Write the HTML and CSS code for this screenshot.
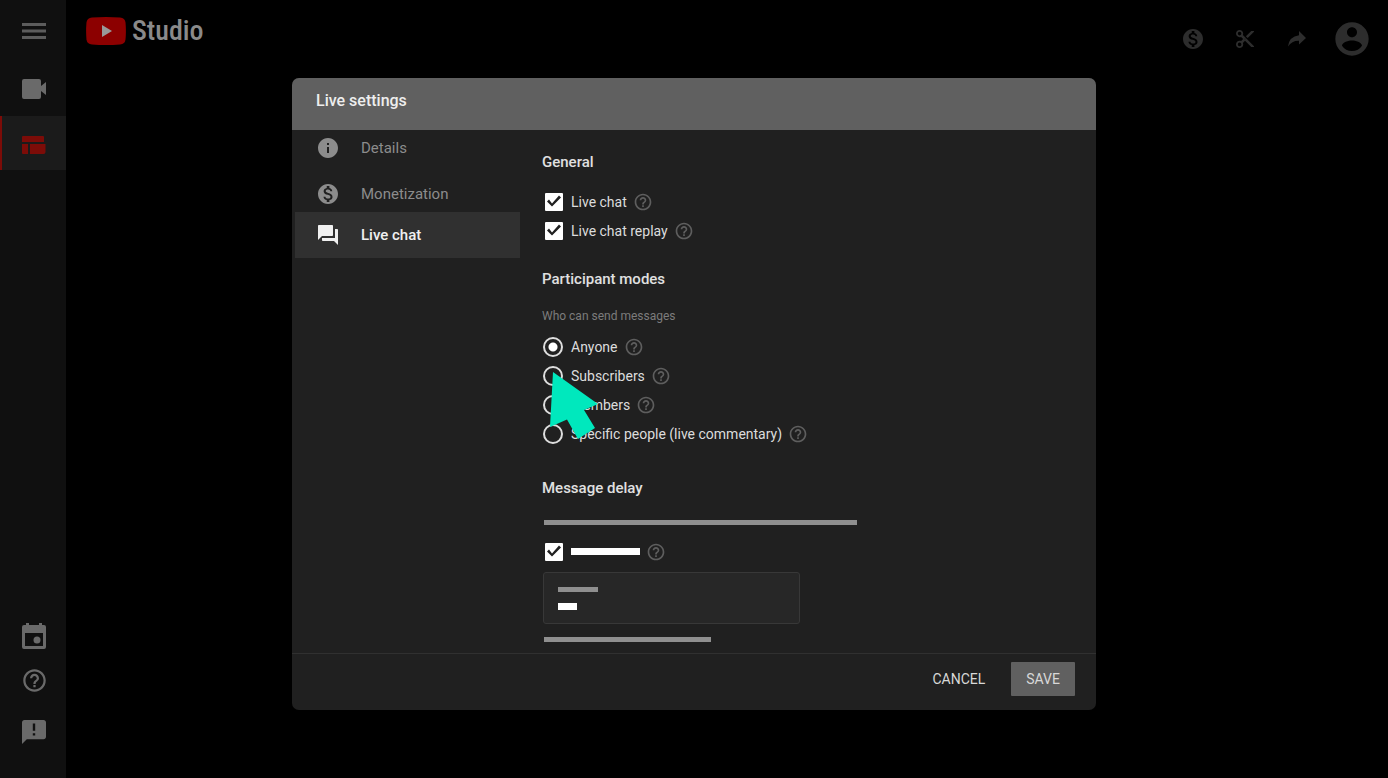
FILE: index.html
```html
<!DOCTYPE html>
<html lang="en">
<head>
<meta charset="utf-8">
<meta name="viewport" content="width=device-width, initial-scale=1">
<title>Studio - Live settings</title>
<link rel="stylesheet" href="styles.css">
</head>
<body>
<svg class="defs" aria-hidden="true">
  <symbol id="help" viewBox="0 0 24 24"><path d="M11 18h2v-2h-2v2zm1-16C6.480 2 2 6.480 2 12s4.480 10 10 10 10-4.480 10-10S17.520 2 12 2zm0 18c-4.410 0-8-3.590-8-8s3.590-8 8-8 8 3.590 8 8-3.590 8-8 8zm0-14c-2.210 0-4 1.790-4 4h2c0-1.100.9-2 2-2s2 .9 2 2c0 2-3 1.750-3 5h2c0-2.250 3-2.500 3-5 0-2.210-1.790-4-4-4z"/></symbol>
  <symbol id="dollar" viewBox="0 0 24 24"><path d="M12 2C6.480 2 2 6.480 2 12s4.480 10 10 10 10-4.480 10-10S17.520 2 12 2zm1.410 16.090V20h-2.670v-1.930c-1.710-.36-3.160-1.460-3.270-3.400h1.960c.1 1.050.82 1.870 2.650 1.870 1.960 0 2.400-.98 2.400-1.590 0-.83-.44-1.610-2.670-2.140-2.480-.6-4.180-1.620-4.180-3.670 0-1.720 1.390-2.840 3.110-3.210V4h2.670v1.950c1.860.45 2.790 1.860 2.850 3.390H14.300c-.05-1.110-.64-1.870-2.220-1.870-1.500 0-2.400.68-2.400 1.640 0 .84.65 1.390 2.670 1.910s4.180 1.390 4.180 3.910c-.01 1.830-1.380 2.830-3.120 3.160z"/></symbol>
</svg>

<div class="app">
  <nav class="sidebar" aria-label="Studio">
    <button class="side-button side-menu" aria-label="Menu"><svg width="24" height="18" viewBox="0 0 24 18"><path d="M0 1h24v3H0zm0 6.500h24v3H0zM0 14h24v3H0z"/></svg></button>
    <button class="side-button" aria-label="Stream"><svg width="24" height="20" viewBox="0 0 24 20"><path d="M2 0h15q2 0 2 2v5l5-4v13l-5-4v6q0 2-2 2H2q-2 0-2-2V2q0-2 2-2z"/></svg></button>
    <button class="side-button side-active" aria-label="Dashboard"><svg width="24" height="18" viewBox="0 0 24 18"><path d="M0 1q0-1 1-1h20q1 0 1 1v5H0zM0 8h6v10H1q-1 0-1-1zM8 8h15.500v8q0 2-2 2H8z"/></svg></button>
    <div class="side-bottom">
      <button class="side-button" aria-label="Schedule"><svg width="24" height="26" viewBox="0 0 24 26"><path fill-rule="evenodd" d="M4 0h3v2h10V0h3v2h2q2 0 2 2v20q0 2-2 2H2q-2 0-2-2V4q0-2 2-2h2zM3 10v13h18V10z"/><circle cx="15" cy="17" r="3.500"/></svg></button>
      <button class="side-button" aria-label="Help"><svg width="27" height="27"><use href="#help"/></svg></button>
      <button class="side-button side-feedback" aria-label="Send feedback"><svg width="24" height="24" viewBox="2 2 20 20"><path d="M20 2H4c-1.100 0-2 .9-2 2v18l4-4h14c1.100 0 2-.9 2-2V4c0-1.100-.9-2-2-2zm-7 13h-2v-2h2zm0-4h-2V5h2z"/></svg></button>
    </div>
  </nav>
  <header class="topbar">
    <a class="logo" href="#"><svg width="40" height="28" viewBox="0 0 40 28"><path class="logo-box" d="M6 .6Q20-.6 34 .6q5 .5 5.500 5 .8 8.400 0 16.800-.5 4.500-5.500 5-14 1.200-28 0-5-.5-5.500-5-.8-8.400 0-16.800Q1 1.100 6 .6z"/><path class="logo-play" d="M16 8l10 6-10 6z"/></svg><span>Studio</span></a>
    <div class="tools">
      <button class="tool" aria-label="Monetize"><svg width="24" height="24"><use href="#dollar"/></svg></button>
      <button class="tool" aria-label="Create clip"><svg width="18" height="18" viewBox="2 2 20 20"><path d="M9.640 7.640c.23-.5.36-1.050.36-1.640 0-2.210-1.790-4-4-4S2 3.790 2 6s1.790 4 4 4c.59 0 1.140-.13 1.640-.36L10 12l-2.360 2.360C7.140 14.130 6.590 14 6 14c-2.210 0-4 1.790-4 4s1.790 4 4 4 4-1.790 4-4c0-.59-.13-1.140-.36-1.640L12 14l7 7h3v-1L9.640 7.640zM6 8a2 2 0 1 1 0-4 2 2 0 0 1 0 4zm0 12a2 2 0 1 1 0-4 2 2 0 0 1 0 4zm6-7.500a.5.5 0 1 1 0-1 .5.5 0 0 1 0 1zM19 3l-6 6 2 2 7-7V3z"/></svg></button>
      <button class="tool" aria-label="Share"><svg width="18" height="16" viewBox="0 0 18 16"><path d="M11 0l7 7-7 6.500V9.800Q4 9.500 0 15.500 1 5.500 11 4.200z"/></svg></button>
      <button class="tool account" aria-label="Account"><svg width="40" height="40" viewBox="0 0 24 24"><path d="M12 2C6.480 2 2 6.480 2 12s4.480 10 10 10 10-4.480 10-10S17.520 2 12 2zm0 3c1.660 0 3 1.340 3 3s-1.340 3-3 3-3-1.340-3-3 1.340-3 3-3zm0 14.200c-2.500 0-4.710-1.280-6-3.220.03-1.990 4-3.080 6-3.080 1.990 0 5.970 1.090 6 3.080-1.290 1.940-3.500 3.220-6 3.220z"/></svg></button>
    </div>
  </header>
</div>

<div class="overlay">
  <section class="dialog" role="dialog" aria-labelledby="dialog-title">
    <h1 class="dialog-title" id="dialog-title">Live settings</h1>
    <div class="dialog-body">
      <nav class="tabs" aria-label="Settings">
        <a class="tab" href="#"><svg width="24" height="24" viewBox="0 0 24 24"><path d="M12 2C6.480 2 2 6.480 2 12s4.480 10 10 10 10-4.480 10-10S17.520 2 12 2zm1 15h-2v-6h2v6zm0-8h-2V7h2v2z"/></svg>Details</a>
        <a class="tab" href="#"><svg width="24" height="24"><use href="#dollar"/></svg>Monetization</a>
        <a class="tab tab-active" href="#" aria-current="page"><svg width="24" height="24" viewBox="0 0 24 24"><path d="M21 6h-2v9H6v2c0 .55.45 1 1 1h11l4 4V7c0-.55-.45-1-1-1zm-4 6V3c0-.55-.45-1-1-1H3c-.55 0-1 .45-1 1v14l4-4h10c.55 0 1-.45 1-1z"/></svg>Live chat</a>
      </nav>
      <form class="content" id="settings">
        <h2>General</h2>
        <div class="options">
          <div class="option"><input class="check" type="checkbox" id="chat" checked><label for="chat">Live chat</label><svg class="help"><use href="#help"/></svg></div>
          <div class="option"><input class="check" type="checkbox" id="replay" checked><label for="replay">Live chat replay</label><svg class="help"><use href="#help"/></svg></div>
        </div>
        <h2 class="modes">Participant modes</h2>
        <p class="hint">Who can send messages</p>
        <div class="options modes-list">
          <div class="option"><input class="radio" type="radio" name="who" id="anyone" checked><label for="anyone">Anyone</label><svg class="help"><use href="#help"/></svg></div>
          <div class="option"><input class="radio" type="radio" name="who" id="subs"><label for="subs">Subscribers</label><svg class="help"><use href="#help"/></svg>
            <svg class="cursor" viewBox="0 0 48 68" aria-hidden="true"><path d="M3 0l45 32-14 6 11 18-17 11-11-19.500L0 55z"/></svg></div>
          <div class="option"><input class="radio" type="radio" name="who" id="members"><label for="members">Members</label><svg class="help"><use href="#help"/></svg></div>
          <div class="option"><input class="radio" type="radio" name="who" id="specific"><label for="specific">Specific people (live commentary)</label><svg class="help"><use href="#help"/></svg></div>
        </div>
        <h2 class="delay">Message delay</h2>
        <div class="bar bar-long"></div>
        <div class="option delay-option"><input class="check" type="checkbox" id="delay" aria-label="Delay messages" checked><label class="bar bar-label" for="delay"></label><svg class="help"><use href="#help"/></svg></div>
        <button class="field" type="button" aria-label="Delay length"><span class="bar bar-name"></span><span class="bar bar-value"></span></button>
        <div class="bar bar-medium"></div>
      </form>
    </div>
    <footer class="actions">
      <button class="action" type="button">CANCEL</button>
      <button class="action save" type="submit" form="settings">SAVE</button>
    </footer>
  </section>
</div>
</body>
</html>
```

FILE: styles.css
```css
* { box-sizing: border-box; }

body {
  margin: 0;
  background: #000;
  color: #dcdcdc;
  font-family: Roboto, "Liberation Sans", sans-serif;
  font-size: 14px;
  line-height: 20px;
}

svg { display: block; flex: none; fill: currentColor; }
button { padding: 0; border: 0; background: none; color: inherit; font: inherit; }
a { color: inherit; text-decoration: none; }
h1, h2, p { margin: 0; }
.defs { position: absolute; width: 0; height: 0; }

.app { display: flex; min-height: 100vh; }

.sidebar {
  display: flex;
  flex-direction: column;
  width: 66px;
  background: #101010;
  color: #6a6a6a;
}
.side-button {
  display: flex;
  align-items: center;
  justify-content: center;
  width: 100%;
  height: 54px;
  padding-left: 2px;
}
.side-menu { height: 62px; color: #5c5c5c; }
.side-active { padding: 4px 0 0; border-left: 2px solid #7c0c08; background: #1b1b1b; color: #7c0c08; }
.side-bottom { margin-top: auto; padding-bottom: 17px; }
.side-bottom .side-button { height: 45px; }
.side-bottom .side-feedback { height: 58px; }

.topbar {
  display: flex;
  flex: 1;
  justify-content: space-between;
  align-items: flex-start;
  padding: 16px 16px 0 20px;
}
.logo {
  display: flex;
  align-items: center;
  gap: 6px;
  color: #8a8a8a;
  font-family: "Roboto Condensed", "Liberation Sans Narrow", "Open Sans Condensed", Roboto, sans-serif;
  font-size: 28px;
  font-weight: 500;
  line-height: 30px;
}
.logo-box { fill: #8c0000; }
.logo-play { fill: #999; }
.tools { display: flex; gap: 12px; padding-top: 3px; color: #2d2d2d; }
.tool { display: flex; align-items: center; justify-content: center; width: 40px; height: 40px; }
.account { margin-left: 3px; }

.overlay {
  position: absolute;
  inset: 0;
  display: flex;
  align-items: flex-start;
  justify-content: center;
  padding: 78px 16px 0;
}
.dialog {
  width: 100%;
  max-width: 804px;
  overflow: hidden;
  border-radius: 7px;
  background: #202020;
}
.dialog-title {
  padding: 13px 24px 19px;
  background: #606060;
  color: #eee;
  font-size: 16px;
  font-weight: 500;
  line-height: 20px;
}
.dialog-body { display: flex; }

.tabs { width: 228px; padding-left: 3px; }
.tab {
  display: flex;
  align-items: center;
  gap: 21px;
  height: 36px;
  padding-left: 21px;
  color: #8c8c8c;
  font-size: 15px;
}
.tab:first-child { margin-bottom: 10px; }
.tab-active { height: 46px; background: #303030; color: #f0f0f0; font-weight: 500; }

.content { flex: 1; padding: 22px 22px 11px; }
h2 { color: #e0e0e0; font-size: 15px; font-weight: 500; line-height: 20px; }
.options { margin-top: 15px; }
.option { position: relative; display: flex; align-items: center; height: 29px; }
.option label { margin-right: 6px; }
.help { width: 20px; height: 20px; color: #5e5e5e; }
.modes { margin-top: 24px; }
.hint { margin-top: 19px; color: #7c7c7c; font-size: 12px; line-height: 16px; }
.modes-list { margin-top: 8px; }
.delay { margin-top: 30px; }
.delay-option { margin-top: 12px; }

.check {
  appearance: none;
  width: 18px;
  height: 18px;
  margin: 0 8px 0 3px;
  border-radius: 1px;
  background: #fff;
}
.check:checked::after {
  content: "";
  display: block;
  width: 18px;
  height: 18px;
  background: #202020;
  clip-path: polygon(2px 9px, 4px 7px, 7px 11px, 14px 3px, 16px 5px, 7px 14px);
}
.radio {
  appearance: none;
  width: 20px;
  height: 20px;
  margin: 0 8px 0 1px;
  border: 2px solid #dedede;
  border-radius: 50%;
}
.radio:checked { background: radial-gradient(circle, #fff 4px, transparent 5px); }

.cursor {
  position: absolute;
  z-index: 1;
  top: 11px;
  left: 8px;
  width: 48px;
  height: 68px;
  fill: #00e8bd;
}

.bar { display: block; height: 5px; background: #8f8f8f; }
.bar-long { max-width: 313px; margin: 22px 0 0 2px; }
.bar-label { width: 69px; height: 7px; background: #fff; }
.bar-medium { width: 167px; margin: 13px 0 0 2px; }
.field {
  display: block;
  width: 257px;
  height: 52px;
  margin: 6px 0 0 1px;
  padding: 0 14px;
  border: 1px solid #383838;
  border-radius: 3px;
  background: #272727;
}
.bar-name { width: 40px; }
.bar-value { width: 19px; height: 7px; margin-top: 11px; background: #fff; }

.actions {
  display: flex;
  justify-content: flex-end;
  gap: 11px;
  padding: 8px 21px 14px;
  border-top: 1px solid #303030;
}
.action { height: 34px; padding: 0 15px; color: #d8d8d8; }
.save { border-radius: 1px; background: #606060; }
```
